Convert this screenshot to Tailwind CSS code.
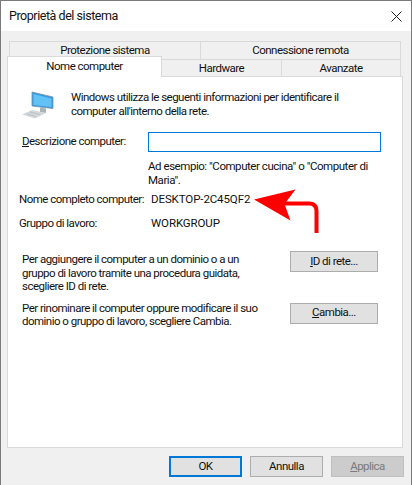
<!DOCTYPE html>
<html lang="it">
<head>
    <meta charset="UTF-8">
    <title>Proprietà del sistema</title>
    <script src="https://cdn.jsdelivr.net/npm/@tailwindcss/browser@4"></script>
</head>
<body class="bg-[#f0f0f0]">
    <!-- Window -->
    <div class="relative w-[412px] h-[485px] overflow-hidden border-x border-t border-[#7a7a7a] bg-[#f0f0f0] font-['Roboto',sans-serif] text-[11.5px] tracking-[-0.52px] leading-[13.5px] text-[#111] whitespace-nowrap">
        <!-- Title bar -->
        <div class="flex items-center justify-between h-[30px] bg-white pl-2 pr-[9px]">
            <span class="text-[12.5px] tracking-[-0.45px]">Proprietà del sistema</span>
            <svg class="w-[11px] h-[11px]" viewBox="0 0 11 11" fill="none" stroke="#222" stroke-width="1"><path d="M.5.5l10 10M10.5.5l-10 10"/></svg>
        </div>

        <!-- Tabs, back row -->
        <div class="flex ml-2 mt-[10px] w-[392px] h-[18px]">
            <div class="w-[192px] flex items-center justify-center border border-b-0 border-[#d9d9d9] bg-[#f0f0f0]">Protezione sistema</div>
            <div class="w-[200px] flex items-center justify-center border border-l-0 border-b-0 border-[#d9d9d9] bg-[#f0f0f0]">Connessione remota</div>
        </div>
        <!-- Tabs, front row -->
        <div class="relative z-10 flex items-end ml-[6px] -mt-[3px] h-[21px]">
            <div class="w-[155px] h-[21px] pb-px flex items-center justify-center border border-b-0 border-[#d9d9d9] bg-white">Nome computer</div>
            <div class="w-[120px] h-[18px] flex items-center justify-center border-t border-r border-[#d9d9d9]">Hardware</div>
            <div class="w-[119px] h-[18px] flex items-center justify-center border-t border-r border-[#d9d9d9]">Avanzate</div>
        </div>

        <!-- Panel -->
        <div class="relative ml-[6px] -mt-px w-[396px] h-[372px] border border-[#d9d9d9] bg-white">
            <div class="flex gap-[15px] pl-[14px] pt-[11px]">
                <svg class="w-[34px] h-[32px] shrink-0" viewBox="0 0 34 32">
                    <path d="M18 19.500L24 20.500V25L18 24Z" fill="#a9b3ba"/>
                    <path d="M10 4L31 9V20.500L10 18Z" fill="#2f9be8" stroke="#7f929f" stroke-width=".8"/>
                    <path d="M11.500 6L29.500 10.500V19L11.500 17Z" fill="#62c2f6"/>
                    <path d="M10 22L24 25L13 30.500L0 26.500Z" fill="#d4d8db"/>
                    <path d="M8 24L18 26.500M5 26L14 28.500" stroke="#b9bfc4" stroke-width="1"/>
                </svg>
                <p class="pt-[3px]">Windows utilizza le seguenti informazioni per identificare il<br>computer all'interno della rete.</p>
            </div>

            <div class="flex items-center mt-[12px] pl-[14px]">
                <span class="w-[126px]"><u>D</u>escrizione computer:</span>
                <div class="w-[233px] h-[20px] border border-[#0078d7] bg-white"></div>
            </div>
            <p class="ml-[140px] mt-[8px] tracking-[-0.45px]">Ad esempio: "Computer cucina" o "Computer di<br>Maria".</p>

            <div class="flex mt-[6px] pl-[11px]">
                <span class="w-[132px]">Nome completo computer:</span>
                <span class="tracking-[-0.1px]">DESKTOP-2C45QF2</span>
            </div>
            <div class="flex mt-[10px] pl-[11px]">
                <span class="w-[132px]">Gruppo di lavoro:</span>
                <span class="tracking-[-0.1px]">WORKGROUP</span>
            </div>

            <div class="flex justify-between mt-[21px] pl-[14px] pr-[24px]">
                <p class="mt-[2px]">Per aggiungere il computer a un dominio o a un<br>gruppo di lavoro tramite una procedura guidata,<br>scegliere ID di rete.</p>
                <button class="w-[88px] h-[21px] border border-[#adadad] bg-[#e1e1e1]"><u>I</u>D di rete...</button>
            </div>
            <div class="flex justify-between mt-[9px] pl-[14px] pr-[24px]">
                <p class="mt-[-1px]">Per rinominare il computer oppure modificare il suo<br>dominio o gruppo di lavoro, scegliere Cambia.</p>
                <button class="w-[88px] h-[21px] border border-[#adadad] bg-[#e1e1e1]"><u>C</u>ambia...</button>
            </div>
        </div>

        <!-- Bottom buttons -->
        <div class="flex justify-end gap-2 mt-[8px] pr-[7px]">
            <button class="w-[73px] h-[21px] border-2 border-[#0078d7] bg-[#e1e1e1]">OK</button>
            <button class="w-[73px] h-[21px] border border-[#adadad] bg-[#e1e1e1]">Annulla</button>
            <button class="w-[73px] h-[21px] border border-[#bfbfbf] bg-[#cccccc] text-[#7a7a7a]"><u>A</u>pplica</button>
        </div>

        <!-- Red annotation arrow -->
        <svg class="absolute left-[252px] top-[179px] w-[70px] h-[56px]" viewBox="0 0 70 56">
            <path d="M1 19.500L42.500 9.500L31.500 24L37.500 40.500Z" fill="#fe0000"/>
            <path d="M30 23.500H56Q63.500 23.500 63.500 31V53" fill="none" stroke="#fe0000" stroke-width="4"/>
        </svg>
    </div>
</body>
</html>
